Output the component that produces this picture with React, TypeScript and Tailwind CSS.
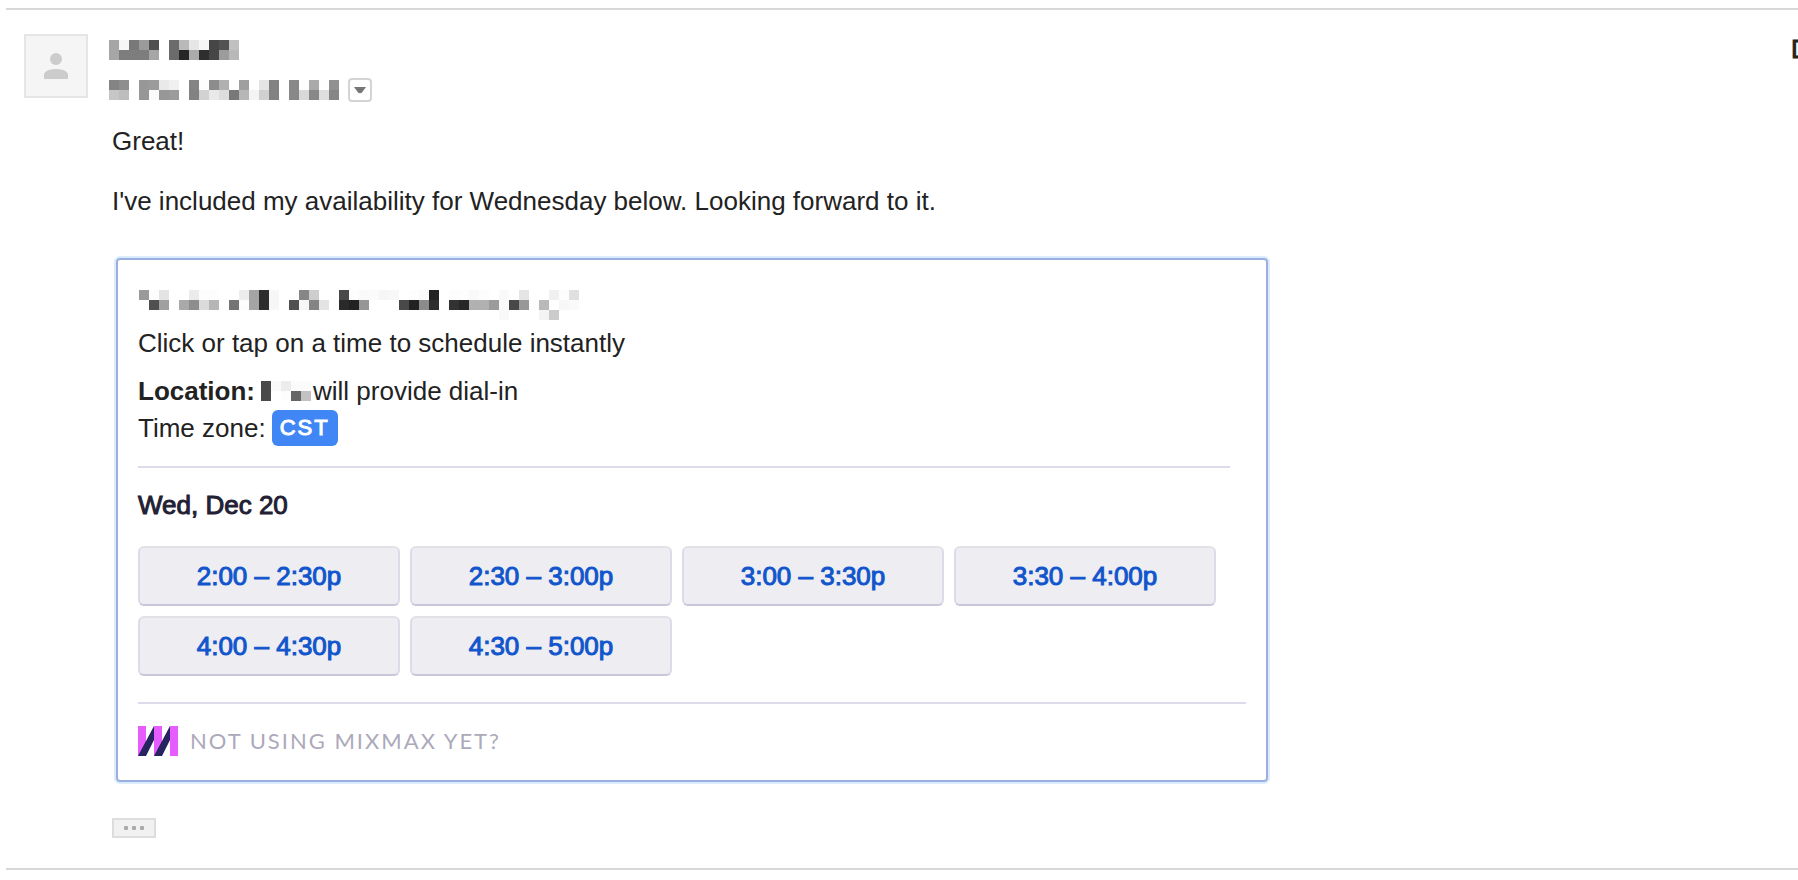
import { useState } from "react";

const slots = [
  "2:00 – 2:30p",
  "2:30 – 3:00p",
  "3:00 – 3:30p",
  "3:30 – 4:00p",
  "4:00 – 4:30p",
  "4:30 – 5:00p",
];

// grey level of each 10px block, ".." is left empty
const senderName = [
  "a6 f7 78 9a 4f .. 6b b9 e6 f7 46 52 c0",
  "a6 7d 7d 7d a6 .. 6b 26 ab 2e 46 9c b8",
];

const recipients = [
  "84 8e .. 97 9b e9 f0 .. 84 fd 8c b0 fe 9f fe e5 82 .. 88 fe aa fe 90",
  "c6 bd .. 97 fb 97 9b .. 82 d2 e9 dd 78 b7 f4 d0 82 .. 88 d9 88 df 86",
];

const eventTitle = [
  "9a fd e4 .. .. eb fd fd .. .. ed a4 2d f6 .. .. 86 cd .. .. 4a fd fa fb f6 f8 .. fd fa 22 .. fc fd f9 fd .. f9 .. e5 .. .. f0 fd e0",
  ".. 50 a0 .. a9 8d db b6 .. 74 fd a4 2d f6 .. 50 f7 84 e4 .. 2a 22 96 .. .. .. 49 22 8b 2d .. 32 27 b1 b1 9b f9 48 98 fd b9 .. f7 fa",
  ".. .. .. .. .. .. .. .. .. .. .. .. .. .. .. .. .. .. .. .. .. .. .. .. .. .. .. .. .. .. .. .. .. .. .. .. f9 .. .. .. f4 cb .. ..",
];

const hostName = [
  "4a f9 ec fb fc",
  "4a .. fd 66 c2",
];

const Redacted = ({ rows, className }: { rows: string[]; className?: string }) => {
  const cells = rows.map((row) => row.split(" "));
  return (
    <svg
      width={cells[0].length * 10}
      height={cells.length * 10}
      shapeRendering="crispEdges"
      aria-hidden="true"
      className={className}
    >
      {cells.map((row, y) =>
        row.map((c, x) =>
          c === ".." ? null : (
            <rect key={`${x}-${y}`} x={x * 10} y={y * 10} width="10" height="10" fill={`#${c}${c}${c}`} />
          )
        )
      )}
    </svg>
  );
};

const Avatar = () => (
  <div className="flex size-16 shrink-0 items-center justify-center border-2 border-[#e5e5e5] bg-[#f5f5f5]">
    <svg width="24" height="26" viewBox="0 0 24 26" fill="#cccccc" aria-hidden="true">
      <circle cx="12" cy="6" r="6" />
      <path d="M0 26v-4c0-4 6-6 12-6s12 2 12 6v4z" />
    </svg>
  </div>
);

const MixmaxLogo = () => (
  <svg width="40" height="30" viewBox="0 0 40 30" aria-hidden="true">
    <path fill="#e65cff" d="M0 0h8v30H0zM16 0h8v30h-8zM32 0h8v30h-8z" />
    <path fill="#27235f" d="M16 0v14L8 30H0zM32 0v14l-8 16h-8z" />
  </svg>
);

const AvailabilityCard = () => {
  return (
    <section className="mt-[42px] ml-1 max-w-[1152px] rounded-[4px] border-2 border-[#9aafe0] pt-[30px] pr-5 pb-6 pl-5 shadow-[0_0_0_2px_#daecfd]">
      <Redacted rows={eventTitle} className="ml-px block max-w-full" />
      <p className="mt-2">Click or tap on a time to schedule instantly</p>
      <p className="mt-[18px] flex flex-wrap items-center">
        <b>Location:</b>
        <Redacted rows={hostName} className="mr-0.5 ml-1.5" />
        will provide dial-in
      </p>
      <p className="mt-1 flex items-center gap-1.5">
        Time zone:
        <span className="rounded-[6px] bg-[#4086f4] px-2 text-[22px] leading-9 tracking-[2px] text-white [-webkit-text-stroke:1px]">
          CST
        </span>
      </p>

      <hr className="mt-5 mr-4 border-t-2 border-[#dddaeb]" />
      <h2 className="mt-[22px] text-[#222033] [-webkit-text-stroke:1px]">Wed, Dec 20</h2>
      <div className="mt-[26px] flex flex-wrap gap-2.5">
        {slots.map((slot) => (
          <a
            key={slot}
            href="#"
            className="w-[262px] rounded-[6px] border-2 border-x-[#dddaeb] border-t-[#e1e1e6] border-b-[#cac6da] bg-[#eeedf2] py-[13px] text-center text-[#1155cc] [-webkit-text-stroke:1px]"
          >
            {slot}
          </a>
        ))}
      </div>

      {/* FOOTER */}
      <hr className="mt-[26px] border-t-2 border-[#dddaeb]" />
      <a
        href="#"
        className="mt-[22px] flex items-center gap-3 font-[Lato,sans-serif] text-[22px] tracking-[2px] text-[#aca9bb]"
      >
        <MixmaxLogo />
        NOT USING MIXMAX YET?
      </a>
    </section>
  );
};

const App = () => {
  const [trimmed, setTrimmed] = useState(true);

  return (
    <main className="overflow-hidden bg-white pt-2 pl-1.5 font-['Liberation_Sans',Arial,sans-serif] text-[26px] leading-[30px] text-[#222222]">
      <article className="flex items-start border-y-2 border-[#d8d8d8] pt-6 pb-[30px] pl-[18px]">
        <Avatar />
        <div className="ml-[21px] min-w-0 flex-1 pt-1.5">
          <Redacted rows={senderName} className="block" />
          <div className="mt-[18px] flex items-center gap-[9px]">
            <Redacted rows={recipients} />
            <button
              type="button"
              aria-label="Show details"
              className="flex size-6 items-center justify-center rounded-[4px] border-2 border-[#d4d4d4]"
            >
              <svg width="12" height="8" viewBox="0 0 12 8" fill="#777777" aria-hidden="true">
                <path d="M0 1h12L8 6.500Q6 8 4 6.500z" />
              </svg>
            </button>
          </div>

          {/* MESSAGE */}
          <div className="mt-6 ml-[3px]">
            <p>Great!</p>
            <p className="mt-[30px]">I've included my availability for Wednesday below. Looking forward to it.</p>
            <AvailabilityCard />
            <button
              type="button"
              aria-label="Show trimmed content"
              aria-expanded={!trimmed}
              onClick={() => setTrimmed(!trimmed)}
              className="mt-9 flex h-5 w-11 items-center justify-center gap-1 border-2 border-[#dddddd] bg-[#f1f1f1]"
            >
              <span className="size-1 rounded-[1px] bg-[#aaaaaa]" />
              <span className="size-1 rounded-[1px] bg-[#aaaaaa]" />
              <span className="size-1 rounded-[1px] bg-[#aaaaaa]" />
            </button>
          </div>
        </div>
        <time className="w-[7px] shrink-0 whitespace-nowrap [-webkit-text-stroke:1px]">D</time>
      </article>
    </main>
  );
};

export default App;
